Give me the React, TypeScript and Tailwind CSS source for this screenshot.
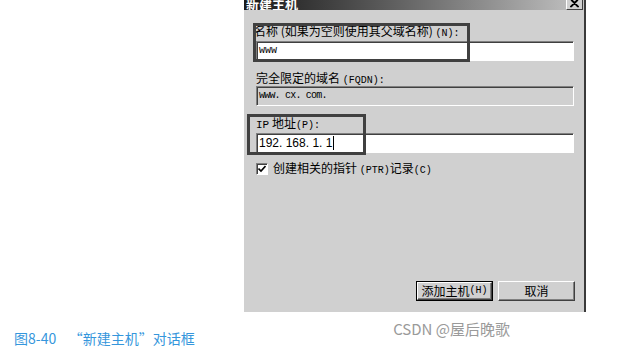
import React from "react";

const cjk = "'Noto Sans CJK SC', 'Liberation Sans', sans-serif";
const mono = "'Liberation Mono', 'Noto Sans CJK SC', monospace";

function L({ children }: { children: React.ReactNode }) {
  return <span style={{ fontFamily: mono, fontSize: "10px" }}>{children}</span>;
}

function Input({ children, readOnly }: { children?: React.ReactNode; readOnly?: boolean }) {
  return (
    <div
      className={`ml-[12px] w-[318px] h-[20px] border border-t-[#808080] border-l-[#808080] border-b-white border-r-white shadow-[inset_1px_1px_0_#404040] flex items-center pl-[2px] text-black ${
        readOnly ? "bg-[#d0d0d0]" : "bg-white"
      }`}
    >
      {children}
    </div>
  );
}

export default function App() {
  return (
    <div className="w-[635px] h-[349px] bg-white overflow-hidden" style={{ fontFamily: cjk }}>
      <div className="relative ml-[244px] w-[342px] h-[312px] bg-[#d0d0d0] border-r-2 border-[#3a3a3a] flex flex-col text-[12px] leading-[16px] text-black">
        {/* title bar */}
        <div className="h-[10px] overflow-hidden flex items-start bg-gradient-to-r from-[#1a1a1a] via-[#6a6a6a] to-[#c4c4c4]">
          <div className="-mt-[3px] ml-[2px] text-white font-bold text-[13px] leading-[13px]">新建主机</div>
          <div className="ml-auto mr-[1px] -mt-[4px] w-[17px] h-[14px] bg-[#d0d0d0] border border-t-white border-l-white border-b-[#404040] border-r-[#404040] flex items-center justify-center">
            <svg width="9" height="8" viewBox="0 0 9 8" className="mt-[2px]">
              <path d="M1 0 L8 7 M8 0 L1 7 M2 0 L9 7 M7 0 L0 7" stroke="#000" strokeWidth="1.2" />
            </svg>
          </div>
        </div>

        <div className="mt-[13px] ml-[10px] h-[16px]">
          名称 (如果为空则使用其父域名称) <L>(N):</L>
        </div>
        <div className="mt-[2px]">
          <Input>
            <L>www</L>
          </Input>
        </div>

        <div className="mt-[9px] ml-[12px] h-[16px]">
          完全限定的域名 <L>(FQDN):</L>
        </div>
        <div className="mt-[0px]">
          <Input readOnly>
            <span style={{ fontFamily: mono, fontSize: "10px", letterSpacing: "-0.8px" }}>www. cx. com.</span>
          </Input>
        </div>

        <div className="mt-[9px] ml-[12px] h-[16px]">
          <span style={{ fontFamily: mono, fontSize: "11px" }}>IP</span> 地址<L>(P):</L>
        </div>
        <div className="mt-[2px]">
          <Input>
            <span style={{ fontFamily: "'Liberation Sans', sans-serif", fontSize: "12px" }}>192. 168. 1. 1</span>
            <span className="ml-[1px] w-[1px] h-[14px] bg-black" />
          </Input>
        </div>

        <div className="mt-[8px] ml-[12px] h-[16px] flex items-center gap-[5px]">
          <div className="w-[12px] h-[12px] bg-white border border-t-[#808080] border-l-[#808080] border-b-white border-r-white shadow-[inset_1px_1px_0_#404040] flex items-center justify-center">
            <svg width="8" height="8" viewBox="0 0 8 8">
              <path d="M0.5 3.5 L3 6 L7.5 1" stroke="#000" strokeWidth="1.6" fill="none" />
            </svg>
          </div>
          <span>
            创建相关的指针 <L>(PTR)</L>记录<L>(C)</L>
          </span>
        </div>

        <div className="flex-1" />
        <div className="flex mb-[11px] ml-[172px] gap-[5px]">
          <div className="w-[77px] h-[20px] border border-black">
            <div className="w-full h-full bg-[#d0d0d0] border border-t-white border-l-white border-b-[#404040] border-r-[#404040] shadow-[inset_-1px_-1px_0_#808080] flex items-center justify-center">
              添加主机 <L>(H)</L>
            </div>
          </div>
          <div className="w-[77px] h-[20px] bg-[#d0d0d0] border border-t-white border-l-white border-b-[#404040] border-r-[#404040] shadow-[inset_-1px_-1px_0_#808080] flex items-center justify-center">
            取消
          </div>
        </div>

        {/* annotation boxes */}
        <div className="absolute left-[9px] top-[23px] w-[217px] h-[39px] border-[3px] border-[#404040]" />
        <div className="absolute left-[3px] top-[114px] w-[119px] h-[41px] border-[3px] border-[#404040]" />
      </div>

      <div className="flex items-start pl-[14px]">
        <div className="mt-[18px] text-[14px] leading-[17px] text-[#3596dc]">
          图8-40&nbsp;&nbsp;&nbsp; “新建主机”对话框
        </div>
        <div className="ml-auto mr-[125px] mt-[8px] text-[15px] leading-[18px] text-[#9a9a9a]">
          CSDN @屋后晚歌
        </div>
      </div>
    </div>
  );
}
